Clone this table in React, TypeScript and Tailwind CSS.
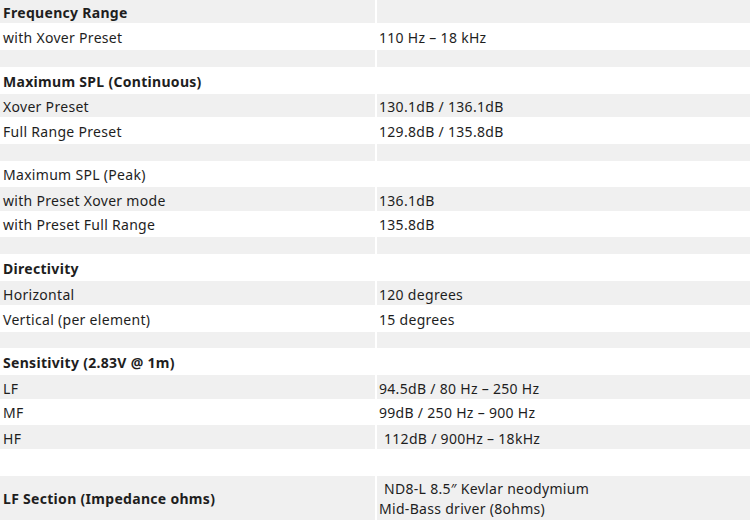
type Row = {
  label?: string;
  value?: React.ReactNode;
  bold?: boolean;
  gray?: boolean;
  h: string;
};

const rows: Row[] = [
  { label: "Frequency Range", bold: true, gray: true, h: "h-[23px]" },
  { label: "with Xover Preset", value: "110 Hz – 18 kHz", h: "h-[27px]" },
  { gray: true, h: "h-[17px]" },
  { label: "Maximum SPL (Continuous)", bold: true, h: "h-[27px]" },
  { label: "Xover Preset", value: "130.1dB / 136.1dB", gray: true, h: "h-[23px]" },
  { label: "Full Range Preset", value: "129.8dB / 135.8dB", h: "h-[27px]" },
  { gray: true, h: "h-[17px]" },
  { label: "Maximum SPL (Peak)", h: "h-[26px]" },
  { label: "with Preset Xover mode", value: "136.1dB", gray: true, h: "h-[24px]" },
  { label: "with Preset Full Range", value: "135.8dB", h: "h-[26px]" },
  { gray: true, h: "h-[17px]" },
  { label: "Directivity", bold: true, h: "h-[27px]" },
  { label: "Horizontal", value: "120 degrees", gray: true, h: "h-[24px]" },
  { label: "Vertical (per element)", value: "15 degrees", h: "h-[27px]" },
  { gray: true, h: "h-[16px]" },
  { label: "Sensitivity (2.83V @ 1m)", bold: true, h: "h-[27px]" },
  { label: "LF", value: "94.5dB / 80 Hz – 250 Hz", gray: true, h: "h-[24px]" },
  { label: "MF", value: "99dB / 250 Hz – 900 Hz", h: "h-[26px]" },
  { label: "HF", value: <span className="pl-[5px]">112dB / 900Hz – 18kHz</span>, gray: true, h: "h-[24px]" },
  { h: "h-[27px]" },
];

export default function App() {
  return (
    <div
      className="w-[750px] h-[520px] overflow-hidden bg-white text-[14px] tracking-[0.3px] text-[#1e1e1e]"
      style={{ fontFamily: '"Noto Sans", "Noto Sans CJK KR", sans-serif' }}
    >
      {rows.map((r, i) => (
        <div key={i} className={`grid grid-cols-[375px_1fr] gap-x-[2px] ${r.h}`}>
          <div
            className={`flex items-end pl-[3px] leading-[16px] ${r.gray ? "bg-[#f0f0f0] pb-[2px]" : "pb-[4px]"} ${
              r.bold ? "font-bold" : ""
            }`}
          >
            {r.label}
          </div>
          <div
            className={`flex items-end pl-[2px] leading-[16px] ${r.gray ? "bg-[#f0f0f0] pb-[2px]" : "pb-[4px]"}`}
          >
            {r.value}
          </div>
        </div>
      ))}
      {/* LF section, two-line value */}
      <div className="grid grid-cols-[375px_1fr] gap-x-[2px] h-[44px]">
        <div className="flex items-center bg-[#f0f0f0] pl-[3px] pt-[1px] font-bold leading-[16px]">
          LF Section (Impedance ohms)
        </div>
        <div className="flex flex-col justify-center bg-[#f0f0f0] pl-[2px] pt-[1px] leading-[20px]">
          <span className="pl-[5px]">ND8-L 8.5″ Kevlar neodymium</span>
          <span>Mid-Bass driver (8ohms)</span>
        </div>
      </div>
    </div>
  );
}
